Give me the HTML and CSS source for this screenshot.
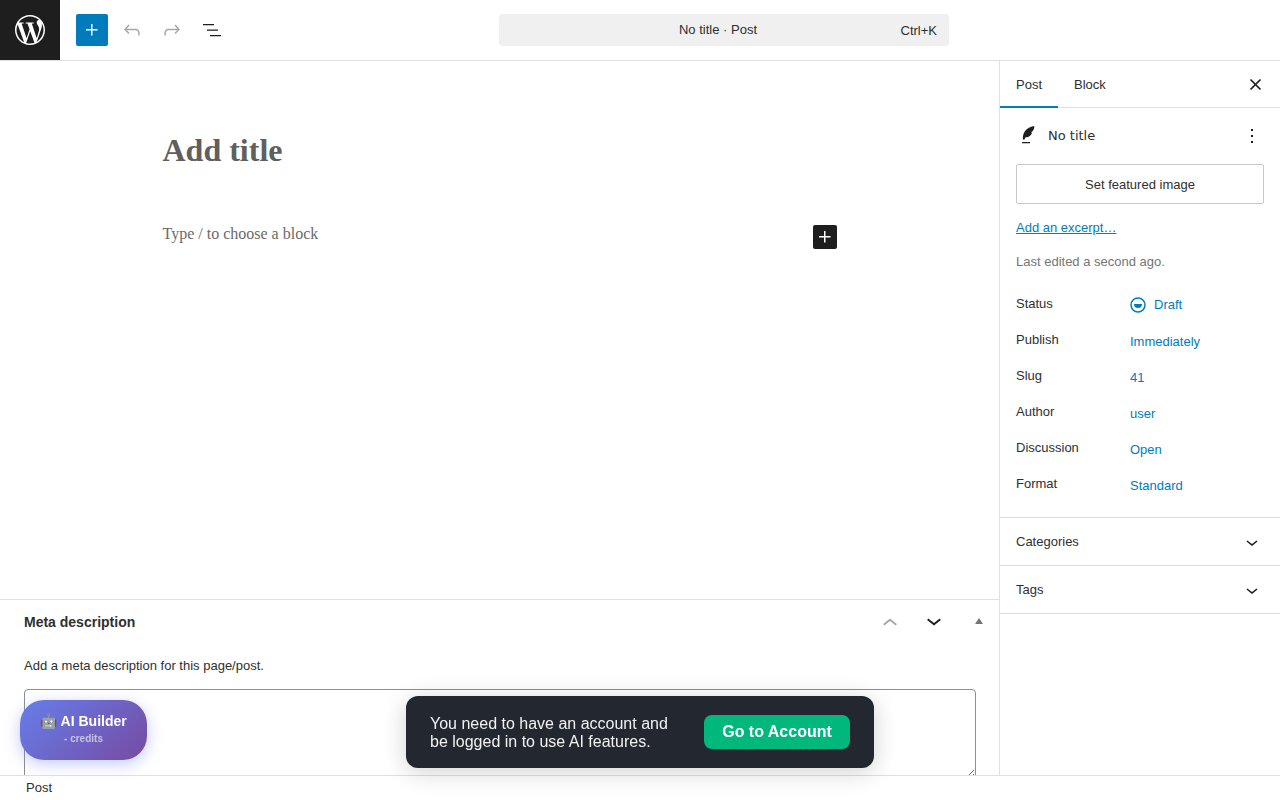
FILE: index.html
```html
<!DOCTYPE html>
<html lang="en">
<head>
    <meta charset="UTF-8">
    <title>Add New Post</title>
    <link rel="stylesheet" href="styles.css">
</head>
<body>
    <div class="topbar">
        <div class="topbar-left">
            <div class="logo">
                <svg width="30" height="30" viewBox="0 0 24 24" fill="#fff"><path d="M21.469 6.825c.84 1.537 1.318 3.3 1.318 5.175 0 3.979-2.156 7.456-5.363 9.325l3.295-9.527c.615-1.54.82-2.771.82-3.864 0-.405-.026-.78-.07-1.11m-7.981.105c.647-.03 1.232-.105 1.232-.105.582-.075.514-.93-.067-.899 0 0-1.755.135-2.88.135-1.064 0-2.85-.15-2.85-.15-.585-.03-.661.855-.075.885 0 0 .54.061 1.125.09l1.68 4.605-2.37 7.08L5.354 6.9c.649-.03 1.234-.1 1.234-.1.585-.075.516-.93-.065-.896 0 0-1.746.138-2.874.138-.2 0-.438-.008-.69-.015C4.911 3.15 8.235 1.215 12 1.215c2.809 0 5.365 1.072 7.286 2.833-.046-.003-.091-.009-.141-.009-1.06 0-1.812.923-1.812 1.914 0 .89.513 1.643 1.06 2.531.411.72.89 1.643.89 2.977 0 .915-.354 1.994-.821 3.479l-1.075 3.585-3.9-11.61.001.014zM12 22.784c-1.059 0-2.081-.153-3.048-.437l3.237-9.406 3.315 9.087c.024.053.05.101.078.149-1.12.393-2.325.609-3.582.609M1.211 12c0-1.564.336-3.05.935-4.39L7.29 21.709C3.694 19.96 1.212 16.271 1.211 12M12 0C5.385 0 0 5.385 0 12s5.385 12 12 12 12-5.385 12-12S18.615 0 12 0"/></svg>
            </div>
            <div class="tools">
                <button class="add-btn">
                    <svg width="24" height="24" viewBox="0 0 24 24" fill="#fff"><path d="M11 12.5V17.5H12.5V12.5H17.5V11H12.5V6H11V11H6V12.5H11Z"/></svg>
                </button>
                <svg class="tool-icon" width="24" height="24" viewBox="0 0 24 24" fill="#a7a7a7"><path d="M18.3 11.7c-.6-.6-1.4-.9-2.3-.9H6.7l2.9-3.3-1.1-1-4.5 5L8.5 16l1-1-2.7-2.7H16c.5 0 .9.2 1.3.5 1 1 1 3.4 1 4.5v.3h1.5v-.2c0-1.5 0-4.3-1.5-5.7z"/></svg>
                <svg class="tool-icon" width="24" height="24" viewBox="0 0 24 24" fill="#a7a7a7"><path d="M15.6 6.5l-1.1 1 2.9 3.3H8c-.9 0-1.7.3-2.3.9-1.4 1.5-1.4 4.2-1.4 5.6v.2h1.5v-.3c0-1.1 0-3.5 1-4.5.3-.3.7-.5 1.3-.5h9.2L14.5 15l1 1.1 4.5-4.6-4.4-5z"/></svg>
                <svg class="tool-icon" width="24" height="24" viewBox="0 0 24 24" fill="#1e1e1e"><path d="M3 6h11v1.3H3V6zm4 5.400h11v1.300H7v-1.300zM10 17h11v1.300H10V17z"/></svg>
            </div>
        </div>
        <div class="topbar-center">
            <div class="command-bar">
                <span class="command-title">No title · Post</span>
                <span class="command-key">Ctrl+K</span>
            </div>
        </div>
        <div class="topbar-right"></div>
    </div>

    <div class="main">
        <div class="editor">
            <div class="canvas">
                <div class="canvas-inner">
                    <h1 class="post-title">Add title</h1>
                    <div class="block-row">
                        <p class="block-hint">Type / to choose a block</p>
                        <button class="block-add">
                            <svg width="24" height="24" viewBox="0 0 24 24" fill="#fff"><path d="M11 12.5V17.5H12.5V12.5H17.5V11H12.5V6H11V11H6V12.5H11Z"/></svg>
                        </button>
                    </div>
                </div>
            </div>
            <div class="meta-box">
                <div class="meta-head">
                    <h2>Meta description</h2>
                    <div class="meta-controls">
                        <svg width="30" height="30" viewBox="0 -1.200 24 24" fill="#a7a7a7"><path d="M6.5 12.4L12 8l5.5 4.4-.9 1.2L12 10l-4.5 3.6-1-1.2z"/></svg>
                        <svg width="30" height="30" viewBox="0 1.200 24 24" fill="#1e1e1e"><path d="M17.5 11.6L12 16l-5.500-4.400.9-1.200L12 14l4.500-3.600 1 1.200z"/></svg>
                        <span class="meta-toggle"></span>
                    </div>
                </div>
                <p class="meta-help">Add a meta description for this page/post.</p>
                <textarea class="meta-input"></textarea>
            </div>
        </div>

        <div class="sidebar">
            <div class="tabs">
                <div class="tab active">Post</div>
                <div class="tab">Block</div>
                <svg class="tabs-close" width="24" height="24" viewBox="0 0 24 24" fill="none" stroke="#1e1e1e" stroke-width="1.700"><path d="M6.500 6.500l10 10M16.500 6.500l-10 10"/></svg>
            </div>
            <div class="post-panel">
                <div class="post-card">
                    <svg width="24" height="24" viewBox="0 0 24 24" fill="#1e1e1e"><path d="M6 18h8v1.300H6zM7 15.500C6.300 10 9 3.500 18.300 2c.2 3-1 5.200-3.300 6.300l1.100.4C14.800 11.800 12.500 13.600 9.500 13.200L8.300 15.800z"/></svg>
                    <span class="post-name">No title</span>
                    <svg width="24" height="24" viewBox="0 0 24 24" fill="#1e1e1e"><path d="M13 19h-2v-2h2v2zm0-6h-2v-2h2v2zm0-6h-2V5h2v2z"/></svg>
                </div>
                <button class="featured-btn">Set featured image</button>
                <a class="excerpt-link" href="#">Add an excerpt…</a>
                <p class="last-edited">Last edited a second ago.</p>
                <div class="summary">
                    <div class="summary-row first">
                        <span class="summary-label">Status</span>
                        <a class="summary-value" href="#">
                            <svg width="16" height="16" viewBox="0 0 16 16"><circle cx="8" cy="8" r="7" fill="none" stroke="#007cba" stroke-width="1.5"/><path d="M4 7h8a4 4 0 0 1-8 0z" fill="#007cba"/></svg>
                            Draft
                        </a>
                    </div>
                    <div class="summary-row"><span class="summary-label">Publish</span><a class="summary-value" href="#">Immediately</a></div>
                    <div class="summary-row"><span class="summary-label">Slug</span><a class="summary-value" href="#">41</a></div>
                    <div class="summary-row"><span class="summary-label">Author</span><a class="summary-value" href="#">user</a></div>
                    <div class="summary-row"><span class="summary-label">Discussion</span><a class="summary-value" href="#">Open</a></div>
                    <div class="summary-row"><span class="summary-label">Format</span><a class="summary-value" href="#">Standard</a></div>
                </div>
            </div>
            <div class="side-section">
                <span>Categories</span>
                <svg width="24" height="24" viewBox="0 0 24 24" fill="#1e1e1e"><path d="M17.5 11.600L12 16l-5.500-4.400.9-1.200L12 14l4.500-3.600 1 1.200z"/></svg>
            </div>
            <div class="side-section">
                <span>Tags</span>
                <svg width="24" height="24" viewBox="0 0 24 24" fill="#1e1e1e"><path d="M17.5 11.600L12 16l-5.500-4.400.9-1.200L12 14l4.500-3.600 1 1.200z"/></svg>
            </div>
        </div>
    </div>

    <div class="footer"><span>Post</span></div>

    <div class="ai-builder">
        <div class="ai-name">🤖 AI Builder</div>
        <div class="ai-credits">- credits</div>
    </div>

    <div class="toast">
        <p>You need to have an account and<br>be logged in to use AI features.</p>
        <button class="toast-btn">Go to Account</button>
    </div>
</body>
</html>
```

FILE: styles.css
```css
* {
    box-sizing: border-box;
}
body {
    margin: 0;
    height: 800px;
    overflow: hidden;
    display: flex;
    flex-direction: column;
    font-family: "Liberation Sans", Arial, sans-serif;
    font-size: 13px;
    color: #2f2f2f;
    background: #fff;
}
button {
    font-family: inherit;
    cursor: pointer;
}

/* top bar */
.topbar {
    display: flex;
    align-items: center;
    height: 61px;
    flex-shrink: 0;
    border-bottom: 1px solid #e0e0e0;
}
.topbar-left {
    display: flex;
    align-items: center;
    width: 240px;
}
.logo {
    display: flex;
    align-items: center;
    justify-content: center;
    width: 60px;
    height: 60px;
    background: #1e1e1e;
}
.tools {
    display: flex;
    align-items: center;
    gap: 16px;
    margin-left: 16px;
}
.tools .add-btn {
    margin-right: -4px;
}
.add-btn {
    display: flex;
    align-items: center;
    justify-content: center;
    width: 32px;
    height: 32px;
    padding: 0;
    border: none;
    border-radius: 2px;
    background: #007cba;
}
.topbar-center {
    flex: 1;
    display: flex;
    justify-content: center;
}
.topbar-right {
    width: 72px;
}
.command-bar {
    position: relative;
    display: flex;
    align-items: center;
    justify-content: center;
    width: 450px;
    height: 32px;
    border-radius: 4px;
    background: #f0f0f0;
}
.command-title {
    margin: -1px 12px 0 0;
}
.command-key {
    position: absolute;
    right: 12px;
}

/* editor */
.main {
    flex: 1;
    display: flex;
    min-height: 0;
}
.editor {
    flex: 1;
    display: flex;
    flex-direction: column;
    min-width: 0;
    overflow: hidden;
}
.canvas {
    height: 538px;
    flex-shrink: 0;
}
.canvas-inner {
    width: 674px;
    margin: 0 auto;
    padding-top: 69px;
}
.post-title {
    margin: 0;
    font-family: "Liberation Serif", serif;
    font-size: 32px;
    line-height: 40px;
    font-weight: 700;
    color: #5f5f5f;
}
.block-row {
    display: flex;
    justify-content: space-between;
    margin-top: 55px;
}
.block-hint {
    margin: 0;
    font-family: "Liberation Serif", serif;
    font-size: 16px;
    line-height: 18px;
    color: #6a6a6a;
}
.block-add {
    width: 24px;
    height: 24px;
    padding: 0;
    border: none;
    border-radius: 2px;
    background: #1e1e1e;
}

/* meta box */
.meta-box {
    flex-shrink: 0;
    border-top: 1px solid #e0e0e0;
}
.meta-head {
    display: flex;
    align-items: center;
    justify-content: space-between;
    height: 44px;
    padding-left: 24px;
}
.meta-head h2 {
    margin: 0;
    font-size: 14px;
    font-weight: 700;
}
.meta-controls {
    display: flex;
    align-items: center;
    gap: 14px;
    padding-right: 16px;
}
.meta-toggle {
    width: 0;
    height: 0;
    margin: -3px 0 0 12px;
    border-left: 4px solid transparent;
    border-right: 4px solid transparent;
    border-bottom: 6px solid #757575;
}
.meta-help {
    margin: 14px 0 0 24px;
    line-height: 16px;
}
.meta-input {
    display: block;
    width: 952px;
    height: 90px;
    margin: 15px 0 0 24px;
    border: 1px solid #8c8f94;
    border-radius: 4px;
    background: #fff;
}

/* sidebar */
.sidebar {
    width: 281px;
    flex-shrink: 0;
    border-left: 1px solid #e0e0e0;
}
.tabs {
    position: relative;
    display: flex;
    height: 47px;
    border-bottom: 1px solid #e0e0e0;
}
.tab {
    display: flex;
    align-items: center;
    height: 47px;
    padding: 0 16px;
}
.tab.active {
    box-shadow: inset 0 -2px 0 #007cba;
}
.tabs-close {
    position: absolute;
    right: 12px;
    top: 12px;
}
.post-panel {
    height: 410px;
    padding: 16px;
    border-bottom: 1px solid #e0e0e0;
}
.post-card {
    display: flex;
    align-items: center;
    height: 24px;
}
.post-name {
    flex: 1;
    margin: -2px 0 0 8px;
    font-family: "DejaVu Sans", sans-serif;
    font-size: 13px;
}
.featured-btn {
    display: block;
    width: 248px;
    height: 40px;
    margin-top: 16px;
    border: 1px solid #c8c8c8;
    border-radius: 2px;
    background: #fff;
    font-size: 13px;
    color: #2f2f2f;
}
.excerpt-link {
    display: block;
    margin-top: 16px;
    line-height: 16px;
    color: #007cba;
}
.last-edited {
    margin: 18px 0 0;
    line-height: 16px;
    color: #757575;
}
.summary {
    margin-top: 16px;
}
.summary-row {
    display: flex;
    align-items: center;
    height: 36px;
}
.summary-row.first {
    height: 37px;
}
.summary-label {
    width: 114px;
    margin-top: -3px;
}
.summary-value {
    display: flex;
    align-items: center;
    gap: 8px;
    color: #007cba;
    text-decoration: none;
}
.side-section {
    display: flex;
    align-items: center;
    justify-content: space-between;
    height: 48px;
    padding: 0 16px;
    border-bottom: 1px solid #e0e0e0;
}

/* footer */
.footer {
    position: relative;
    z-index: 2;
    display: flex;
    align-items: center;
    height: 25px;
    flex-shrink: 0;
    padding: 0 0 2px 26px;
    border-top: 1px solid #e0e0e0;
    background: #fff;
}

/* floating things */
.ai-builder {
    position: fixed;
    left: 20px;
    top: 700px;
    width: 127px;
    height: 60px;
    z-index: 5;
    border-radius: 24px;
    padding-top: 12px;
    text-align: center;
    color: #fff;
    background: linear-gradient(135deg, #667eea, #764ba2);
    box-shadow: 0 4px 15px rgba(102, 126, 234, 0.4);
}
.ai-name {
    font-size: 14px;
    line-height: 18px;
    font-weight: 700;
}
.ai-credits {
    margin-top: 2px;
    font-size: 10px;
    line-height: 14px;
    font-weight: 700;
    opacity: 0.6;
}
.toast {
    position: fixed;
    left: 406px;
    top: 696px;
    width: 468px;
    height: 72px;
    z-index: 5;
    display: flex;
    align-items: center;
    justify-content: space-between;
    padding: 0 24px;
    border-radius: 12px;
    background: #23272f;
    box-shadow: 0 4px 24px rgba(0, 0, 0, 0.18);
}
.toast p {
    margin: 2px 0 0;
    font-size: 16px;
    line-height: 18px;
    color: #f1f1f1;
}
.toast-btn {
    width: 146px;
    height: 34px;
    padding: 0;
    border: none;
    border-radius: 8px;
    background: #00b87c;
    color: #fff;
    font-size: 16px;
    font-weight: 700;
}
```
